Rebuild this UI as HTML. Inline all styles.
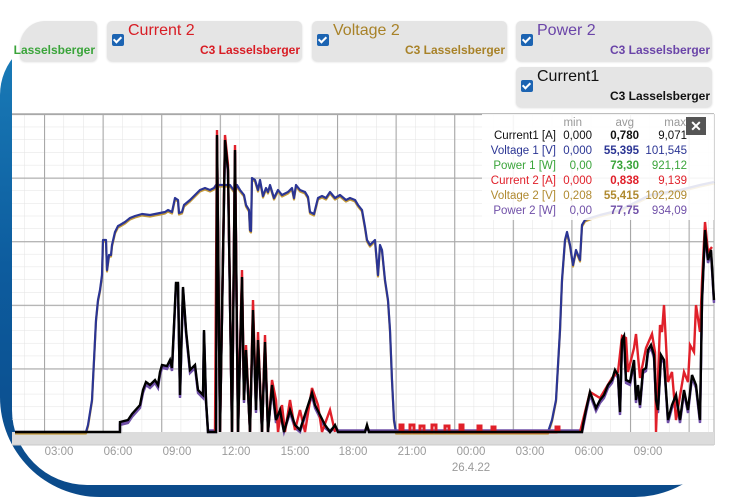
<!DOCTYPE html>
<html><head><meta charset="utf-8"><style>
html,body{margin:0;padding:0;background:#fff;width:735px;height:500px;overflow:hidden;position:relative;font-family:"Liberation Sans",Arial,sans-serif}
.blue{position:absolute;left:0;top:35px;width:734px;height:462px;border-radius:60px 0 100px 100px;background:linear-gradient(180deg,#1a7db9 0%,#0d5c9e 50%,#0b4a8a 100%)}
.white{position:absolute;left:12px;top:-60px;width:722px;height:545px;background:#fff;border-radius:85px 0 60px 75px}
.btn{position:absolute;height:40px;background:#e5e5e5;border-radius:5px;box-shadow:0 1px 2px rgba(0,0,0,.15)}
.btn .t{position:absolute;left:21px;top:1px;font-size:16px}
.btn .s{position:absolute;right:2px;bottom:4px;font-size:12px;font-weight:bold}
.cb{position:absolute;left:5px;top:13px;width:12px;height:12px;background:#1c64b2;border-radius:2px}
.cb:after{content:"";position:absolute;left:3px;top:1px;width:3px;height:6px;border:solid #fff;border-width:0 2px 2px 0;transform:rotate(45deg)}
.lab{position:absolute;top:446px;font-size:11.5px;color:#9a9a9a;transform:translateX(-50%)}
.leg{position:absolute;left:482px;top:114px;width:232px;height:106px;background:rgba(255,255,255,.88);font-size:11.5px}
.leg div{position:absolute;white-space:nowrap}
</style></head><body>
<div class="blue"></div>
<div class="white"></div>

<div class="btn" style="left:20px;top:21px;width:77px;border-radius:25px 5px 5px 5px"><span class="s" style="color:#3aa43a">Lasselsberger</span></div>
<div class="btn" style="left:107px;top:21px;width:195px"><div class="cb"></div><span class="t" style="color:#d81c24">Current 2</span><span class="s" style="color:#d81c24">C3 Lasselsberger</span></div>
<div class="btn" style="left:312px;top:21px;width:195px"><div class="cb"></div><span class="t" style="color:#a88228">Voltage 2</span><span class="s" style="color:#a88228">C3 Lasselsberger</span></div>
<div class="btn" style="left:516px;top:21px;width:196px;border-radius:5px 18px 5px 5px"><div class="cb"></div><span class="t" style="color:#6a44a8">Power 2</span><span class="s" style="color:#6a44a8">C3 Lasselsberger</span></div>
<div class="btn" style="left:516px;top:67px;width:196px"><div class="cb"></div><span class="t" style="color:#111">Current1</span><span class="s" style="color:#111">C3 Lasselsberger</span></div>

<svg style="position:absolute;left:0;top:0" width="735" height="500">
<defs>
<pattern id="mn" x="44" y="114" width="19.53" height="12.72" patternUnits="userSpaceOnUse"><path d="M0 0V12.72M0 0H19.53" stroke="#e2e2e2" stroke-width="1" fill="none"/></pattern>
<pattern id="mj" x="44" y="114" width="58.6" height="63.6" patternUnits="userSpaceOnUse"><path d="M0.5 0V63.6M0 0.5H58.6" stroke="#a8a8a8" stroke-width="1.2" fill="none"/></pattern>
</defs>
<rect x="12" y="114" width="702" height="318" fill="url(#mn)"/>
<rect x="12" y="114" width="702" height="318" fill="url(#mj)"/>
<line x1="12" y1="114" x2="714" y2="114" stroke="#a8a8a8" stroke-width="1.5"/>
<line x1="714" y1="114" x2="714" y2="445" stroke="#a8a8a8"/>
<rect x="12" y="432" width="702" height="13" fill="#dcdcdc"/>
<line x1="12" y1="445" x2="714" y2="445" stroke="#c8c8c8"/>

<g fill="none" stroke-width="2.2" stroke-linejoin="round">
<polyline stroke="#c49a3a" transform="translate(0,1.5)" points="15,432 86,432 88,425 92,400 94,360 96,320 98,300 100,290 102,275 103,240 106,240 107,270 109,255 111,255 112,245 115,232 118,226 120,225 125,222 130,218 135,216 142,214 150,215 160,213 165,212 168,210 172,212 175,198 178,200 179,213 182,212 184,205 190,200 195,195 200,190 205,188 210,190 214,188 216,185 230,185 235,192 237,185 240,190 244,195 246,205 249,210 250,230 251,231 252,178 255,180 258,190 260,180 263,196 266,188 268,192 270,185 274,198 278,190 282,195 288,192 292,188 294,198 296,185 300,190 305,192 308,197 310,212 314,214 318,198 322,196 326,198 330,192 335,198 340,195 346,200 350,198 355,200 358,205 362,210 365,227 367,240 370,245 375,240 378,275 380,245 382,250 385,280 388,300 390,330 392,380 394,420 396,432 548,432 552,420 556,400 560,330 562,280 565,240 567,232 570,245 573,265 576,250 580,260 582,225 585,220 590,218 600,215 620,210 650,195 680,190 700,185 714,182"/>
<polyline stroke="#2b3594" points="15,432 86,432 88,425 92,400 94,360 96,320 98,300 100,290 102,275 103,240 106,240 107,270 109,255 111,255 112,245 115,232 118,226 120,225 125,222 130,218 135,216 142,214 150,215 160,213 165,212 168,210 172,212 175,198 178,200 179,213 182,212 184,205 190,200 195,195 200,190 205,188 210,190 214,188 216,185 230,185 235,192 237,185 240,190 244,195 246,205 249,210 250,230 251,231 252,178 255,180 258,190 260,180 263,196 266,188 268,192 270,185 274,198 278,190 282,195 288,192 292,188 294,198 296,185 300,190 305,192 308,197 310,212 314,214 318,198 322,196 326,198 330,192 335,198 340,195 346,200 350,198 355,200 358,205 362,210 365,227 367,240 370,245 375,240 378,275 380,245 382,250 385,280 388,300 390,330 392,380 394,420 396,432 548,432 552,420 556,400 560,330 562,280 565,240 567,232 570,245 573,265 576,250 580,260 582,225 585,220 590,218 600,215 620,210 650,195 680,190 700,185 714,182"/>
</g>

<g fill="none" stroke-width="2.4" stroke-linejoin="miter">
<polyline id="cur" stroke="#7050a8" transform="translate(0,3)" points="120,429 120,422 128,420 132,414 140,405 143,390 146,382 150,385 155,380 158,385 160,372 162,365 167,366 170,360 172,368 176,283 178,283 180,395 183,287 186,330 188,350 190,370 195,365 198,390 203,395 204,330 206,400 208,429 216,429 217,135 220,429 225,140 228,170 232,429 235,150 238,429 242,277 244,400 246,350 250,429 253,310 256,410 258,340 262,429 265,342 268,429 272,385 276,420 280,410 284,429 290,410 295,425 300,429 312,393 315,405 320,415 325,425 330,429 335,425 338,429 365,429 367,425 369,429 582,429 583,425 586,410 590,392 593,400 596,408 600,400 604,395 608,385 612,380 615,370 618,375 620,412 622,340 624,336 626,380 630,382 634,360 636,400 638,385 640,405 643,370 646,368 648,350 651,345 654,355 656,400 658,410 661,355 664,360 668,420 672,405 676,395 680,420 684,390 688,410 692,375 696,385 700,420 702,300 705,230 708,260 711,250 714,300"/>
<use href="#cur" stroke="#3aa43a" transform="translate(0,-1.5)"/>
<polyline stroke="#e0202a" points="215,432 217,130 220,432 225,135 228,165 232,432 235,145 238,432 242,270 244,400 246,345 250,432 253,300 256,405 258,332 262,432 265,335 268,432 272,380 276,400 278,432 282,405 285,432 290,400 295,430 300,410 305,432 312,388 318,405 322,432 330,410 335,432"/>
<polyline stroke="#e0202a" points="580,432 583,420 590,392 600,398 612,378 618,372 622,336 626,338 628,372 634,348 636,334 640,378 646,348 652,334 655,352 656,432 660,325 662,332 664,305 668,382 672,372 676,420 684,372 688,382 690,345 694,352 696,305 700,332 702,282 705,222 708,252 712,247"/>
<polyline stroke="#e0202a" stroke-width="3" points="400,432 400,425 403,425 403,432 410,432 410,425 414,425 414,432 420,432 420,426 424,426 424,432 432,432 432,425 436,425 436,432 445,432 445,426 449,426 449,432 460,432 460,425 463,425 463,432 478,432 478,426 481,426 481,432 492,432 492,427 495,427 495,432 556,432 556,427 559,427 559,432"/>
<polyline stroke="#000" transform="translate(0,4)" points="15,428 120,428 120,418 128,416 132,410 140,401 143,386 146,378 150,381 155,376 158,381 160,368 162,361 167,362 170,356 172,364 176,279 178,279 180,391 183,283 186,326 188,346 190,366 195,361 198,386 203,391 204,326 206,396 208,428 216,428 217,131 220,428 225,136 228,166 232,428 235,146 238,428 242,273 244,396 246,346 250,428 253,306 256,406 258,336 262,428 265,338 268,428 272,381 276,416 280,406 284,428 290,406 295,421 300,426 312,389 315,401 320,411 325,421 330,428 335,421 338,428 365,428 367,421 369,428 582,428 583,421 586,406 590,388 593,396 596,404 600,396 604,391 608,381 612,376 615,366 618,371 620,408 622,336 624,332 626,376 630,378 634,356 636,396 638,381 640,401 643,366 646,364 648,346 651,341 654,351 656,396 658,406 661,351 664,356 668,416 672,401 676,391 680,416 684,386 688,406 692,371 696,381 700,416 702,296 705,226 708,256 711,246 714,296"/>
</g>
</svg>

<div class="leg">
<div style="right:132px;top:3px;color:#999">min</div>
<div style="right:80px;top:3px;color:#999">avg</div>
<div style="right:28px;top:3px;color:#999">max</div>
<div style="right:8px;top:3px;width:20px;height:18px;background:#555;color:#fff;font-weight:bold;font-size:14px;text-align:center;line-height:18px">✕</div>
<div style="right:158px;top:16px;color:#111">Current1 [A]</div><div style="right:122px;top:16px;color:#111">0,000</div><div style="right:75px;top:16px;color:#111;font-weight:bold">0,780</div><div style="right:27px;top:16px;color:#111">9,071</div>
<div style="right:158px;top:31px;color:#2b3594">Voltage 1 [V]</div><div style="right:122px;top:31px;color:#2b3594">0,000</div><div style="right:75px;top:31px;color:#2b3594;font-weight:bold">55,395</div><div style="right:27px;top:31px;color:#2b3594">101,545</div>
<div style="right:158px;top:46px;color:#3aa43a">Power 1 [W]</div><div style="right:122px;top:46px;color:#3aa43a">0,00</div><div style="right:75px;top:46px;color:#3aa43a;font-weight:bold">73,30</div><div style="right:27px;top:46px;color:#3aa43a">921,12</div>
<div style="right:158px;top:61px;color:#e0202a">Current 2 [A]</div><div style="right:122px;top:61px;color:#e0202a">0,000</div><div style="right:75px;top:61px;color:#e0202a;font-weight:bold">0,838</div><div style="right:27px;top:61px;color:#e0202a">9,139</div>
<div style="right:158px;top:76px;color:#b08a30">Voltage 2 [V]</div><div style="right:122px;top:76px;color:#b08a30">0,208</div><div style="right:75px;top:76px;color:#b08a30;font-weight:bold">55,415</div><div style="right:27px;top:76px;color:#b08a30">102,209</div>
<div style="right:158px;top:91px;color:#7050a8">Power 2 [W]</div><div style="right:122px;top:91px;color:#7050a8">0,00</div><div style="right:75px;top:91px;color:#7050a8;font-weight:bold">77,75</div><div style="right:27px;top:91px;color:#7050a8">934,09</div>
</div>

<div class="lab" style="left:59px">03:00</div>
<div class="lab" style="left:118px">06:00</div>
<div class="lab" style="left:177px">09:00</div>
<div class="lab" style="left:236px">12:00</div>
<div class="lab" style="left:295px">15:00</div>
<div class="lab" style="left:353px">18:00</div>
<div class="lab" style="left:412px">21:00</div>
<div class="lab" style="left:471px">00:00</div>
<div class="lab" style="left:471px;top:462px">26.4.22</div>
<div class="lab" style="left:530px">03:00</div>
<div class="lab" style="left:589px">06:00</div>
<div class="lab" style="left:648px">09:00</div>
</body></html>
